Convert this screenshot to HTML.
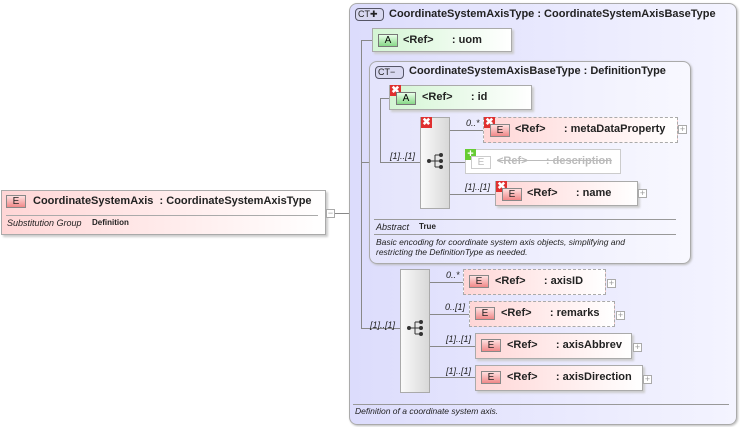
<!DOCTYPE html>
<html><head><meta charset="utf-8"><style>
body{margin:0;width:740px;height:427px;background:#fff;position:relative;overflow:hidden;font-family:"Liberation Sans",sans-serif;}
div,span{position:absolute;box-sizing:border-box;}
.t{white-space:nowrap;font-size:11px;font-weight:bold;color:#222;margin-top:1px;}
.i{white-space:nowrap;font-size:9px;font-style:italic;color:#222;}
.el{background:linear-gradient(90deg,#ffd6d6,#fff);border:1px solid #aaa;box-shadow:2px 2px 2px #ccc;}
.dash{border:1px dashed #aaa;}
.at{background:linear-gradient(90deg,#d4f5d4,#fff);border:1px solid #aaa;box-shadow:2px 2px 2px #ccc;}
.eb{width:20px;height:13px;border:1px solid #888;background:linear-gradient(#ffe0e0,#f08888);font-size:10px;text-align:center;line-height:11px;color:#222;}
.ab{width:20px;height:13px;border:1px solid #777;background:linear-gradient(#e8ffe8,#88d888);font-size:10px;text-align:center;line-height:11px;}
.pl{width:9px;height:9px;border:1px solid #aaa;background:#fff;font-size:9px;line-height:7px;text-align:center;color:#999;}
.h{height:1px;background:#888;}
.v{width:1px;background:#888;}
.x{width:11px;height:11px;background:#e03030;color:#fff;font-size:10px;line-height:11px;text-align:center;font-weight:bold;}
.seq{background:linear-gradient(90deg,#fafafa,#d8d8d8);border:1px solid #aaa;}
.ct{height:13px;border:1px solid #556;border-radius:4px;background:#d8d8f0;font-size:9px;line-height:11px;padding-left:2px;color:#222;}
</style></head><body>

<!-- left element -->
<div class="el" style="left:1px;top:190px;width:325px;height:45px;"></div>
<div class="eb" style="left:6px;top:195px;">E</div>
<div class="t" style="left:33px;top:194px;">CoordinateSystemAxis&nbsp; : CoordinateSystemAxisType</div>
<div class="h" style="left:6px;top:215px;width:312px;background:#aaa"></div>
<div class="i" style="left:7px;top:218px;">Substitution Group</div>
<div class="t" style="left:92px;top:217px;font-size:8px;">Definition</div>
<div class="pl" style="left:326px;top:209px;">−</div>
<div class="h" style="left:335px;top:213px;width:14px;"></div>

<!-- outer CT -->
<div style="left:349px;top:3px;width:388px;height:422px;border:1px solid #aaa;border-radius:8px;background:linear-gradient(90deg,#dcdcfc,#f4f4ff);box-shadow:1px 1px 2px #bbb;"></div>
<div class="ct" style="left:355px;top:8px;width:29px;">CT✚</div>
<div class="t" style="left:389px;top:7px;">CoordinateSystemAxisType : CoordinateSystemAxisBaseType</div>

<div class="v" style="left:361px;top:40px;height:289px;"></div>
<div class="h" style="left:361px;top:40px;width:12px;"></div>
<div class="h" style="left:361px;top:162px;width:8px;"></div>
<div class="h" style="left:361px;top:328px;width:39px;"></div>

<!-- uom -->
<div class="at" style="left:372px;top:28px;width:140px;height:24px;border-radius:0;"></div>
<div class="ab" style="left:378px;top:34px;">A</div>
<div class="t" style="left:403px;top:33px;">&lt;Ref&gt;&nbsp;&nbsp;&nbsp;&nbsp;&nbsp; : uom</div>

<!-- inner CT -->
<div style="left:369px;top:61px;width:322px;height:203px;border:1px solid #aaa;border-radius:8px;background:linear-gradient(90deg,#e4e4fc,#f8f8ff);box-shadow:1px 1px 2px #bbb;"></div>
<div class="ct" style="left:375px;top:66px;width:29px;">CT−</div>
<div class="t" style="left:409px;top:64px;">CoordinateSystemAxisBaseType : DefinitionType</div>
<div class="v" style="left:380px;top:98px;height:65px;"></div>
<div class="h" style="left:380px;top:98px;width:10px;"></div>
<div class="h" style="left:380px;top:162px;width:40px;"></div>
<div class="i" style="left:390px;top:151px;">[1]..[1]</div>

<div class="at" style="left:389px;top:85px;width:143px;height:25px;"></div>
<div class="x" style="left:390px;top:85px;">✖</div>
<div class="ab" style="left:396px;top:92px;">A</div>
<div class="t" style="left:422px;top:90px;">&lt;Ref&gt;&nbsp;&nbsp;&nbsp;&nbsp;&nbsp; : id</div>

<div class="seq" style="left:420px;top:117px;width:30px;height:92px;"></div>
<div class="x" style="left:421px;top:117px;">✖</div>
<svg style="position:absolute;left:426px;top:153px" width="20" height="18"><circle cx="3" cy="8" r="2" fill="#333"/><path d="M3 8H9M9 2V14M9 2H15M9 8H15M9 14H15" stroke="#333" fill="none"/><circle cx="15" cy="2" r="2" fill="#333"/><circle cx="15" cy="8" r="2" fill="#333"/><circle cx="15" cy="14" r="2" fill="#333"/></svg>
<div class="h" style="left:450px;top:130px;width:34px;"></div>
<div class="h" style="left:450px;top:162px;width:15px;"></div>
<div class="h" style="left:450px;top:194px;width:45px;"></div>
<div class="i" style="left:466px;top:118px;">0..*</div>
<div class="i" style="left:465px;top:182px;">[1]..[1]</div>

<div class="el dash" style="left:483px;top:117px;width:195px;height:26px;box-shadow:none;"></div>
<div class="x" style="left:484px;top:117px;">✖</div>
<div class="eb" style="left:490px;top:124px;">E</div>
<div class="t" style="left:515px;top:122px;">&lt;Ref&gt;&nbsp;&nbsp;&nbsp;&nbsp;&nbsp; : metaDataProperty</div>
<div class="pl" style="left:678px;top:125px;">+</div>

<div style="left:465px;top:149px;width:156px;height:25px;border:1px solid #ccc;background:#fff;"></div>
<div style="left:465px;top:149px;width:11px;height:11px;background:#6c3;color:#fff;font-size:11px;line-height:11px;text-align:center;font-weight:bold;">+</div>
<div class="eb" style="left:471px;top:156px;background:#fff;border-color:#ccc;color:#bbb;">E</div>
<div class="t" style="left:497px;top:154px;color:#bbb;text-decoration:line-through;">&lt;Ref&gt;&nbsp;&nbsp;&nbsp;&nbsp;&nbsp; : description</div>

<div class="el" style="left:495px;top:181px;width:143px;height:25px;"></div>
<div class="x" style="left:496px;top:181px;">✖</div>
<div class="eb" style="left:502px;top:188px;">E</div>
<div class="t" style="left:527px;top:186px;">&lt;Ref&gt;&nbsp;&nbsp;&nbsp;&nbsp;&nbsp; : name</div>
<div class="pl" style="left:638px;top:189px;">+</div>

<div class="h" style="left:374px;top:219px;width:302px;background:#999;"></div>
<div class="i" style="left:376px;top:222px;">Abstract</div>
<div class="t" style="left:419px;top:221px;font-size:8px;">True</div>
<div class="h" style="left:374px;top:234px;width:302px;background:#999;"></div>
<div class="i" style="left:376px;top:237px;font-size:8.5px;line-height:10px;">Basic encoding for coordinate system axis objects, simplifying and<br>restricting the DefinitionType as needed.</div>

<!-- outer seq -->
<div class="seq" style="left:400px;top:269px;width:30px;height:124px;"></div>
<svg style="position:absolute;left:406px;top:320px" width="20" height="18"><circle cx="3" cy="8" r="2" fill="#333"/><path d="M3 8H9M9 2V14M9 2H15M9 8H15M9 14H15" stroke="#333" fill="none"/><circle cx="15" cy="2" r="2" fill="#333"/><circle cx="15" cy="8" r="2" fill="#333"/><circle cx="15" cy="14" r="2" fill="#333"/></svg>
<div class="i" style="left:370px;top:320px;">[1]..[1]</div>
<div class="h" style="left:430px;top:282px;width:33px;"></div>
<div class="h" style="left:430px;top:314px;width:39px;"></div>
<div class="h" style="left:430px;top:346px;width:45px;"></div>
<div class="h" style="left:430px;top:377px;width:45px;"></div>
<div class="i" style="left:446px;top:270px;">0..*</div>
<div class="i" style="left:445px;top:302px;">0..[1]</div>
<div class="i" style="left:446px;top:334px;">[1]..[1]</div>
<div class="i" style="left:446px;top:366px;">[1]..[1]</div>

<div class="el dash" style="left:463px;top:269px;width:143px;height:26px;box-shadow:none;"></div>
<div class="eb" style="left:469px;top:275px;">E</div>
<div class="t" style="left:495px;top:274px;">&lt;Ref&gt;&nbsp;&nbsp;&nbsp;&nbsp;&nbsp; : axisID</div>
<div class="pl" style="left:607px;top:279px;">+</div>

<div class="el dash" style="left:469px;top:301px;width:146px;height:26px;box-shadow:none;"></div>
<div class="eb" style="left:475px;top:307px;">E</div>
<div class="t" style="left:501px;top:306px;">&lt;Ref&gt;&nbsp;&nbsp;&nbsp;&nbsp;&nbsp; : remarks</div>
<div class="pl" style="left:616px;top:311px;">+</div>

<div class="el" style="left:475px;top:333px;width:157px;height:26px;"></div>
<div class="eb" style="left:481px;top:339px;">E</div>
<div class="t" style="left:507px;top:338px;">&lt;Ref&gt;&nbsp;&nbsp;&nbsp;&nbsp;&nbsp; : axisAbbrev</div>
<div class="pl" style="left:633px;top:343px;">+</div>

<div class="el" style="left:475px;top:365px;width:168px;height:26px;"></div>
<div class="eb" style="left:481px;top:371px;">E</div>
<div class="t" style="left:507px;top:370px;">&lt;Ref&gt;&nbsp;&nbsp;&nbsp;&nbsp;&nbsp; : axisDirection</div>
<div class="pl" style="left:643px;top:375px;">+</div>

<div class="h" style="left:353px;top:404px;width:376px;background:#999;"></div>
<div class="i" style="left:355px;top:406px;font-size:8.5px;">Definition of a coordinate system axis.</div>
</body></html>
